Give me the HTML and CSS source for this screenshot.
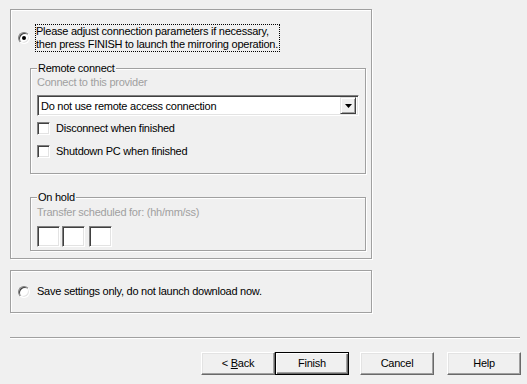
FILE: index.html
```html
<!DOCTYPE html>
<html lang="en">
<head>
  <meta charset="UTF-8" />
  <title>Mirroring wizard</title>
  <link rel="stylesheet" href="styles.css">
</head>
<body>

  <div class="wizard">

    <!-- Launch option with its connection settings -->
    <div class="panel panel-main">
      <div class="option">
        <span class="radio checked"></span>
        <span class="focus">Please adjust connection parameters if necessary,<br>then press FINISH to launch the mirroring operation.</span>
      </div>

      <fieldset class="group group-remote">
        <legend>Remote connect</legend>
        <div class="hint">Connect to this provider</div>
        <div class="combo">
          <span class="combo-text">Do not use remote access connection</span>
          <span class="combo-btn">
            <svg width="7" height="4" viewBox="0 0 7 4"><path d="M0 0h7L3.5 4z" fill="#000"/></svg>
          </span>
        </div>
        <label class="check check-first"><span class="box"></span>Disconnect when finished</label>
        <label class="check check-second"><span class="box"></span>Shutdown PC when finished</label>
      </fieldset>

      <fieldset class="group group-hold">
        <legend>On hold</legend>
        <div class="hint">Transfer scheduled for: (hh/mm/ss)</div>
        <div class="time">
          <span class="field"></span>
          <span class="field"></span>
          <span class="field field-last"></span>
        </div>
      </fieldset>
    </div>

    <!-- Save-only option -->
    <div class="panel panel-save">
      <div class="option">
        <span class="radio"></span>
        <span class="label">Save settings only, do not launch download now.</span>
      </div>
    </div>

    <div class="separator"></div>

    <div class="buttons">
      <button class="btn btn-back">&lt; <u>B</u>ack</button>
      <button class="btn btn-default">Finish</button>
      <button class="btn btn-cancel">Cancel</button>
      <button class="btn">Help</button>
    </div>

  </div>

</body>
</html>
```

FILE: styles.css
```css
/* Base: classic dialog look */
* { box-sizing: border-box; }
body {
  margin: 0;
  background: #f0f0f0;
  font-family: "Liberation Sans", Arial, sans-serif;
  font-size: 11px;
  line-height: 13px;
  letter-spacing: -0.25px;
  color: #000;
}

.wizard {
  width: 527px;
  height: 384px;
  padding: 9px 0 0 10px;
}

/* Etched frames */
.panel {
  width: 362px;
  border: 1px solid #a0a0a0;
  box-shadow: inset 1px 1px 0 #fff, 1px 1px 0 #fff;
}

.panel-main {
  height: 250px;
  padding: 14px 0 0 7px;
}

.panel-save {
  height: 43px;
  margin-top: 11px;
  padding-left: 7px;
  display: flex;
  align-items: center;
}

/* Radio rows */
.option {
  display: flex;
  align-items: center;
}

.radio {
  width: 12px;
  height: 12px;
  border-radius: 50%;
  background: #fff;
  border: 1px solid;
  border-color: #808080 #fff #fff #808080;
  box-shadow: inset 1px 1px 0 #404040, inset -1px -1px 0 #e3e3e3;
  margin-right: 5px;
  position: relative;
  flex: none;
}

.radio.checked::after {
  content: "";
  position: absolute;
  left: 3px;
  top: 3px;
  width: 4px;
  height: 4px;
  border-radius: 50%;
  background: #000;
}

.focus {
  border: 1px dotted #000;
  padding: 0 1px 0 0;
}

.panel-save .label {
  margin-left: 2px;
}

/* Group boxes */
.group {
  margin: 0 0 0 12px;
  width: 336px;
  padding: 0 6px;
  border: 1px solid #a0a0a0;
  box-shadow: inset 1px 1px 0 #fff, 1px 1px 0 #fff;
  min-width: 0;
}

.group legend {
  padding: 0 1px;
  margin-left: 0;
  background: #f0f0f0;
  line-height: 13px;
}

.group-remote {
  margin-top: 10px;
  padding-bottom: 15px;
}

.group-hold {
  margin-top: 17px;
  padding-bottom: 3px;
}

.hint {
  color: #a0a0a0;
  margin-top: 1px;
}

.group-hold .hint {
  margin-top: 2px;
}

/* Drop-down */
.combo {
  display: flex;
  align-items: center;
  height: 21px;
  margin-top: 6px;
  background: #fff;
  border: 1px solid;
  border-color: #808080 #fff #fff #808080;
  box-shadow: inset 1px 1px 0 #404040, inset -1px -1px 0 #e3e3e3;
  padding: 1px 2px 0 3px;
}

.combo-text {
  flex: 1;
}

.combo-btn {
  width: 16px;
  height: 17px;
  margin-top: -1px;
  display: flex;
  align-items: center;
  justify-content: center;
  background: #f0f0f0;
  border: 1px solid;
  border-color: #e3e3e3 #404040 #404040 #e3e3e3;
  box-shadow: inset 1px 1px 0 #fff, inset -1px -1px 0 #a0a0a0;
}

/* Check boxes */
.check {
  display: flex;
  align-items: center;
  height: 13px;
}

.check-first { margin-top: 6px; }
.check-second { margin-top: 10px; }

.box {
  width: 13px;
  height: 13px;
  margin-right: 6px;
  background: #fff;
  border: 1px solid;
  border-color: #808080 #fff #fff #808080;
  box-shadow: inset 1px 1px 0 #404040, inset -1px -1px 0 #e3e3e3;
}

/* hh / mm / ss fields */
.time {
  display: flex;
  margin-top: 7px;
}

.field {
  width: 23px;
  height: 21px;
  margin-right: 2px;
  background: #fff;
  border: 1px solid;
  border-color: #808080 #fff #fff #808080;
  box-shadow: inset 1px 1px 0 #404040, inset -1px -1px 0 #e3e3e3;
}

.field-last { margin-left: 2px; }

/* Bottom bar */
.separator {
  width: 510px;
  margin-top: 24px;
  border-top: 1px solid #a0a0a0;
  border-bottom: 1px solid #fff;
}

.buttons {
  display: flex;
  justify-content: flex-end;
  margin-top: 13px;
  padding-right: 6px;
}

.btn {
  width: 74px;
  height: 23px;
  padding: 0;
  font: inherit;
  letter-spacing: inherit;
  color: #000;
  background: #f0f0f0;
  border: 1px solid;
  border-color: #fff #696969 #696969 #fff;
  box-shadow: inset -1px -1px 0 #a0a0a0, inset 1px 1px 0 #e3e3e3;
}

.btn-default {
  border: 1px solid #000;
  box-shadow: inset 1px 1px 0 #fff, inset -1px -1px 0 #696969, inset -2px -2px 0 #a0a0a0;
  margin-right: 11px;
}

.btn-cancel {
  margin-right: 13px;
}
```
